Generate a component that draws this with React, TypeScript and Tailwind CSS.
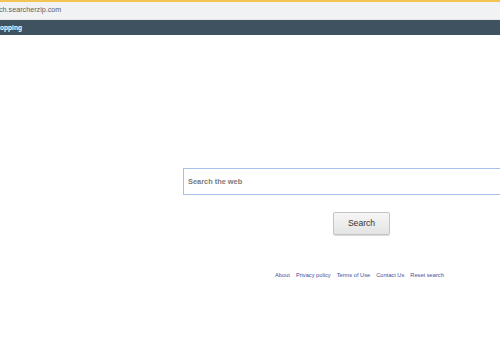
export default function App() {
  const links = ["About", "Privacy policy", "Terms of Use", "Contact Us", "Reset search"];
  return (
    <div className="w-[500px] h-[350px] overflow-hidden bg-white font-['Liberation_Sans',Arial,sans-serif]">
      <div className="h-[2px] bg-[#f3c354]" />
      <div className="h-[17px] bg-[#f1f2f4] flex items-center text-[7.2px] text-[#5a5f66]">
        <span className="-ml-[1px]">ch.searcherzip.com</span>
      </div>
      <div className="h-[1px] bg-[#e4e6e8]" />
      <div className="h-[15px] bg-[#3f5260] flex items-center text-[6.6px] font-bold text-white">
        <span>opping</span>
      </div>
      <div className="pl-[183px] pt-[133px]">
        <div className="h-[27px] w-[330px] border border-[#a9bfe9] flex items-center pl-[4px] text-[7.4px] font-bold text-[#7b7b7b]">
          Search the web
        </div>
        <div className="pl-[150px] pt-[14px]">
          <button className="w-[57px] h-[23px] border border-[#c4c4c4] rounded-[2px] bg-gradient-to-b from-[#f6f6f6] to-[#e4e4e4] shadow-[0_1px_1px_rgba(0,0,0,0.15)] text-[8.6px] text-[#333]">
            Search
          </button>
        </div>
        <div className="pl-[92px] pt-[36px] flex gap-[6px] text-[5.7px] text-[#3e4f9e]">
          {links.map((l) => (
            <span key={l}>{l}</span>
          ))}
        </div>
      </div>
    </div>
  );
}
